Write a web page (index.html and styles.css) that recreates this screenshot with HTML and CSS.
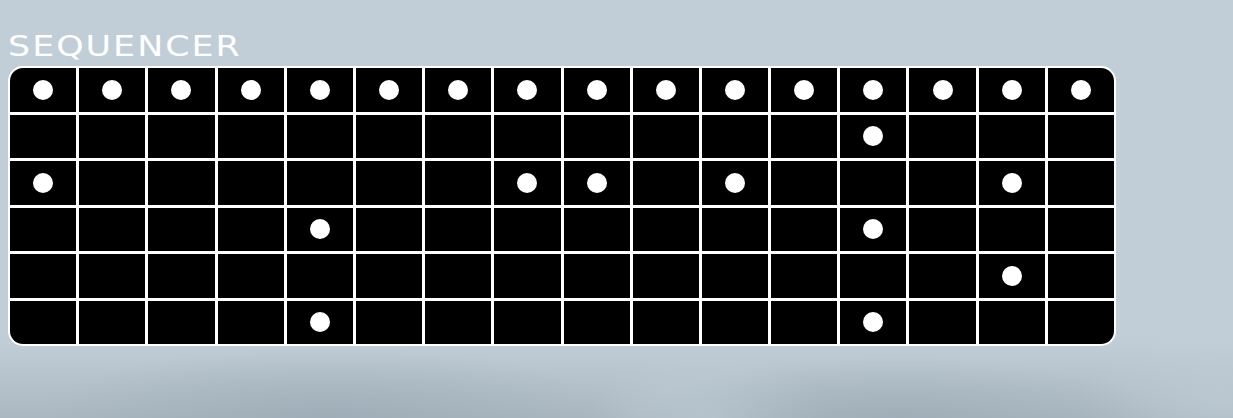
FILE: index.html
```html
<!DOCTYPE html>
<html lang="en">
<head>
  <meta charset="UTF-8">
  <title>Sequencer</title>
  <link rel="stylesheet" href="styles.css">
</head>
<body>

<div class="panel">
  <h2 class="title">SEQUENCER</h2>
  <div class="grid" id="grid"></div>
</div>

<script>
  // one string per row, x = step on
  const pattern = [
    "xxxxxxxxxxxxxxxx",
    "............x...",
    "x......xx.x...x.",
    "....x.......x...",
    "..............x.",
    "....x.......x..."
  ];

  const grid = document.getElementById("grid");

  pattern.forEach(function (row) {
    for (let i = 0; i < row.length; i++) {
      const cell = document.createElement("div");
      cell.className = "cell";
      if (row[i] === "x") {
        const dot = document.createElement("span");
        dot.className = "dot";
        cell.appendChild(dot);
      }
      grid.appendChild(cell);
    }
  });
</script>

</body>
</html>
```

FILE: styles.css
```css
html, body {
  margin: 0;
  height: 100%;
}
body {
  font-family: "DejaVu Sans", sans-serif;
  background:
    radial-gradient(ellipse 300px 70px at 330px 418px, rgba(150,166,177,0.6), transparent),
    radial-gradient(ellipse 260px 60px at 900px 418px, rgba(150,166,177,0.55), transparent),
    radial-gradient(ellipse 120px 70px at 710px 418px, rgba(196,210,219,0.6), transparent),
    radial-gradient(ellipse 140px 70px at 1220px 400px, rgba(196,210,219,0.5), transparent),
    linear-gradient(to bottom, #c1ced7 0, #c1ced7 340px, #abb8c1 418px);
  overflow: hidden;
}
.panel {
  padding: 32px 8px 0;
  width: 1108px;
}
.title {
  display: inline-block;
  margin: 0 0 5px;
  font-size: 29px;
  line-height: 1;
  font-weight: normal;
  letter-spacing: 1.7px;
  color: #fff;
  transform: scaleX(1.2);
  transform-origin: left center;
}
.grid {
  display: grid;
  grid-template-columns: repeat(16, 1fr);
  grid-template-rows: repeat(6, 1fr);
  gap: 3px;
  padding: 2px;
  height: 280px;
  box-sizing: border-box;
  background: #fff;
  border-radius: 15px;
  overflow: hidden;
}
.cell {
  background: #000;
  display: flex;
  align-items: center;
  justify-content: center;
}
.cell:first-child {
  border-top-left-radius: 13px;
}
.cell:nth-child(16) {
  border-top-right-radius: 13px;
}
.cell:nth-child(81) {
  border-bottom-left-radius: 13px;
}
.cell:last-child {
  border-bottom-right-radius: 13px;
}
.dot {
  width: 20px;
  height: 20px;
  border-radius: 50%;
  background: #fff;
}
```
